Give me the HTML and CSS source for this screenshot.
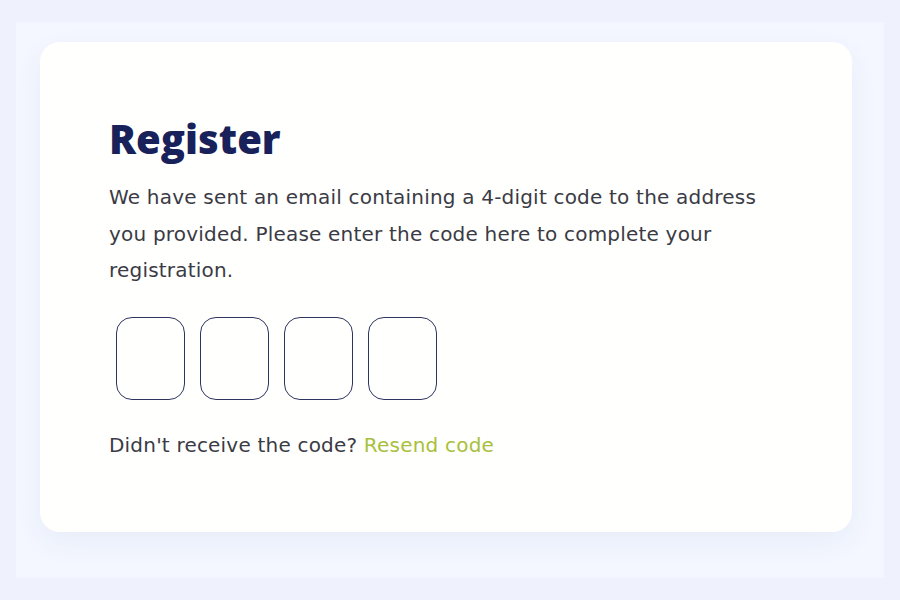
FILE: index.html
```html
<!DOCTYPE html>
<html>
<head>
<meta charset="utf-8">
<link rel="stylesheet" href="styles.css">
</head>
<body>
<div class="panel">
  <div class="card">
    <h1 class="title">Register</h1>
    <p class="desc">We have sent an email containing a 4-digit code to the address you provided. Please enter the code here to complete your registration.</p>
    <div class="codes">
      <div class="code"></div>
      <div class="code"></div>
      <div class="code"></div>
      <div class="code"></div>
    </div>
    <p class="resend">Didn't receive the code? <span class="link">Resend code</span></p>
  </div>
</div>
</body>
</html>
```
FILE: styles.css
```css
html, body { margin: 0; padding: 0; }
body {
  background: #eff2fd;
  width: 900px;
  height: 600px;
  font-family: "DejaVu Sans", "Open Sans", sans-serif;
}
.panel {
  margin: 22px 16px;
  height: 556px;
  box-sizing: border-box;
  background: #f4f7ff;
  padding: 20px 32px 46px 24px;
}
.card {
  height: 490px;
  box-sizing: border-box;
  background: #fffffd;
  border-radius: 20px;
  box-shadow: 0 10px 30px rgba(40, 60, 130, 0.06);
  padding: 72px 69px 0 69px;
}
.title {
  margin: 0;
  font-family: "Open Sans", sans-serif;
  font-size: 40px;
  line-height: 50px;
  font-weight: 800;
  color: #18215a;
}
.desc {
  margin: 15px 0 0 0;
  width: 662px;
  font-size: 20px;
  letter-spacing: 0.2px;
  line-height: 36.5px;
  color: #3a3b45;
}
.codes {
  display: flex;
  gap: 15px;
  margin: 28px 0 0 7px;
}
.code {
  width: 67px;
  height: 81px;
  border: 1px solid #2e3460;
  border-radius: 16px;
}
.resend {
  margin: 30px 0 0 0;
  font-size: 20px;
  letter-spacing: 0.2px;
  line-height: 30px;
  color: #3a3b45;
}
.link { color: #a9c03c; }
```
